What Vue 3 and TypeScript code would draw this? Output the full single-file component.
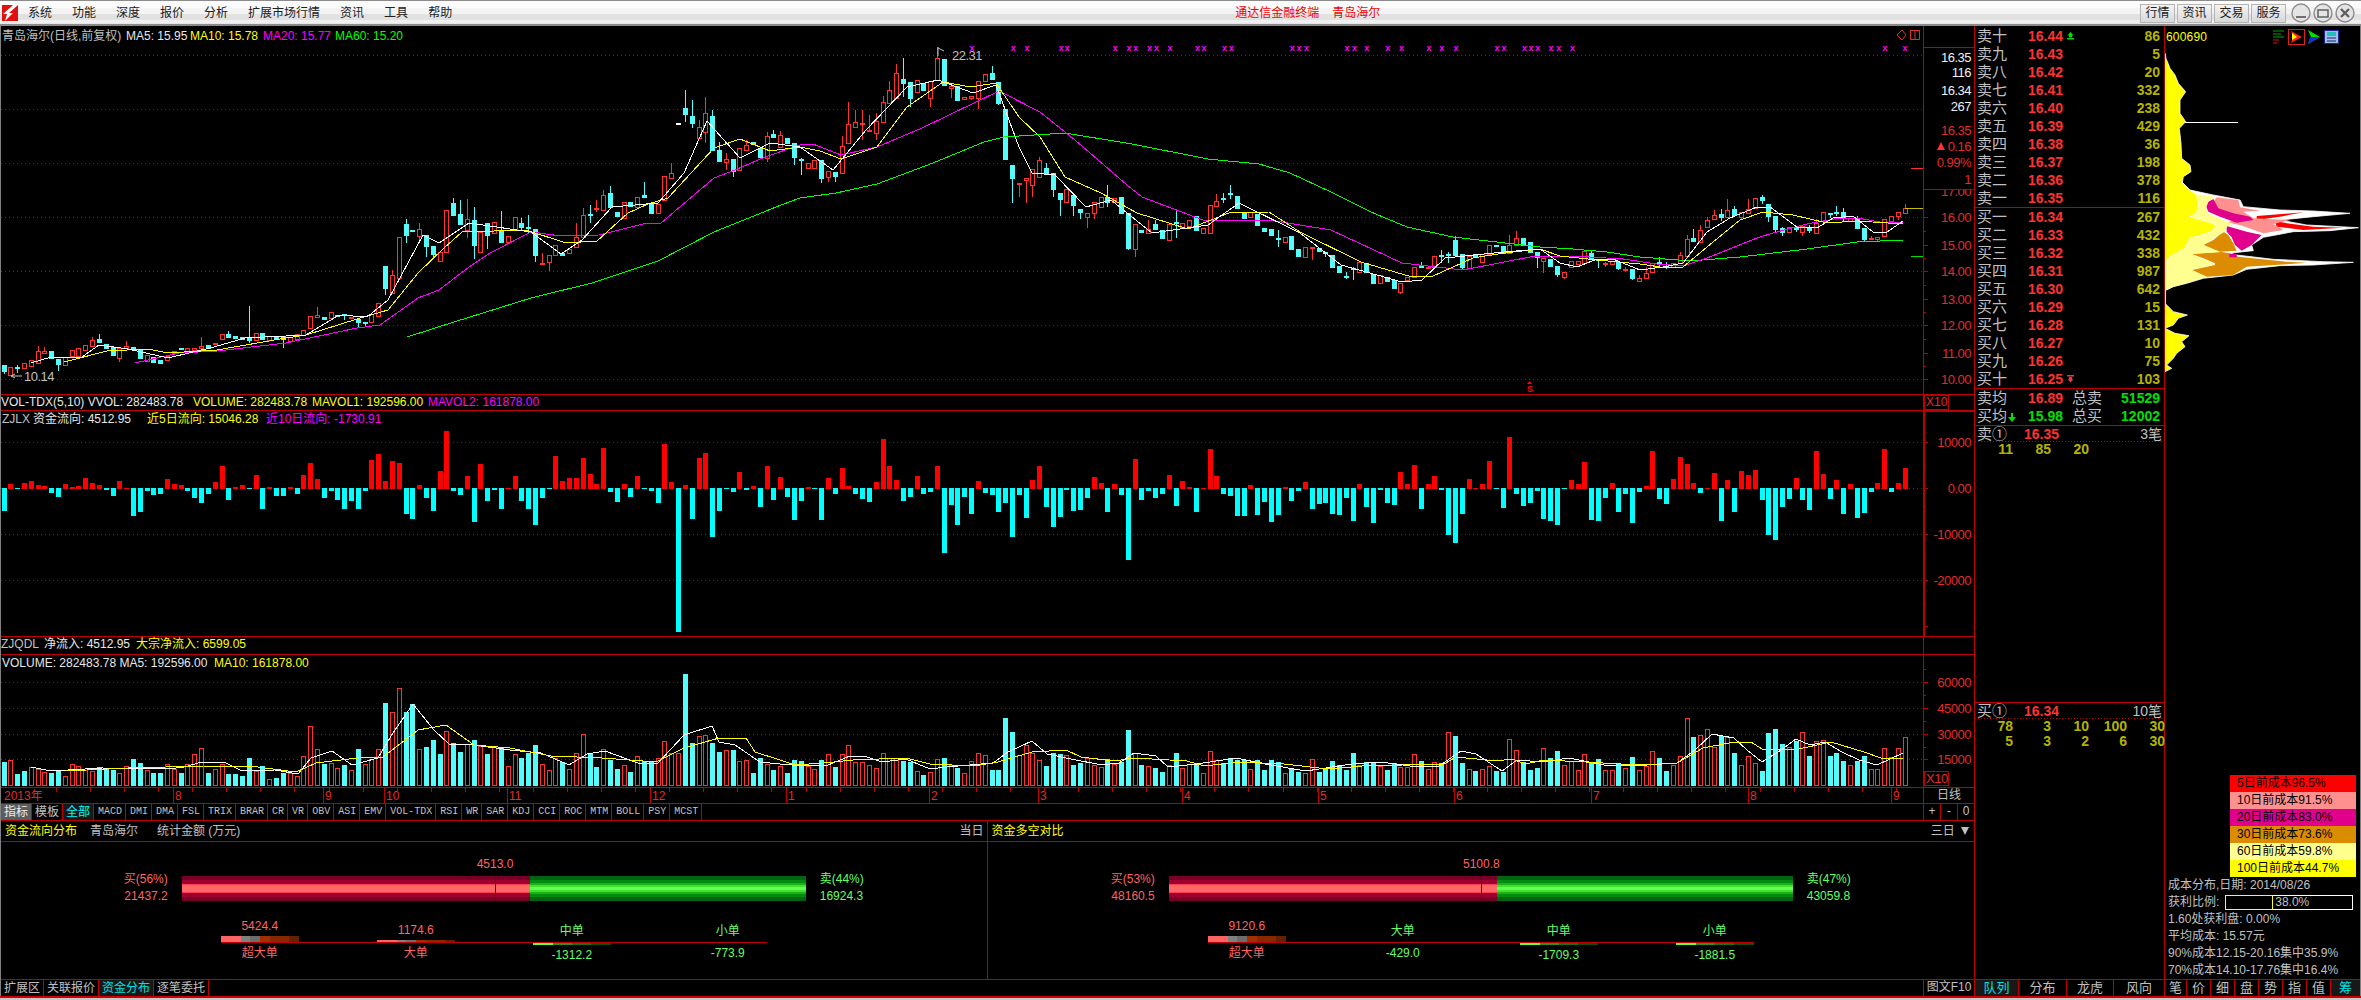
<template>
  <div class="screen">
    <div class="titlebar">
      <svg class="logo" width="16" height="16" viewBox="0 0 16 16">
        <rect width="16" height="16" fill="#e01010" />
        <polygon points="11,0 16,0 7,8 11,8 3,16 5,9 1,9" fill="#fff" />
      </svg>
      <div class="menu"><span v-for="m in menus" :key="m">{{ m }}</span></div>
      <div class="app-title"><span>通达信金融终端</span><span>青岛海尔</span></div>
      <div class="top-btns">
        <span v-for="b in topBtns" :key="b" class="top-btn">{{ b }}</span>
        <svg width="64" height="22" viewBox="0 0 64 22">
          <g fill="#e4e4e4" stroke="#8c8c8c" stroke-width="1.4">
            <circle cx="10" cy="11" r="9" />
            <circle cx="32" cy="11" r="9" />
            <circle cx="54" cy="11" r="9" />
          </g>
          <path d="M5 15h10" stroke="#707070" stroke-width="2" />
          <rect x="27" y="8" width="10" height="7" fill="none" stroke="#606060" stroke-width="1.5" />
          <path d="M50 7l8 8M58 7l-8 8" stroke="#606060" stroke-width="2.4" />
        </svg>
      </div>
    </div>

    <div class="body">
      <div class="left">
        <!-- K线 -->
        <div class="panel">
          <div class="legend legend-main">
            <span class="gray">青岛海尔(日线,前复权)</span>
            <span class="white abs" style="left:124px">MA5: 15.95</span>
            <span class="yellow abs" style="left:188px">MA10: 15.78</span>
            <span class="magenta abs" style="left:261px">MA20: 15.77</span>
            <span class="green abs" style="left:333px">MA60: 15.20</span>
          </div>
          <svg class="chart" width="1973" height="368" viewBox="1 26 1973 368">
            <defs>
              <clipPath id="price-clip"><rect x="1924" y="190" width="50" height="204" /></clipPath>
            </defs>
            <line v-for="y in mainDots" :key="y" class="dots" x1="1" :y1="y + 0.5" x2="1923" :y2="y + 0.5" />
            <text v-for="(m, i) in marks" :key="i" class="mark" :x="m" y="51">x</text>
            <g v-for="(c, i) in candleShapes" :key="i" class="crisp">
              <line :x1="c.x + 2.5" :y1="c.hi" :x2="c.x + 2.5" :y2="c.lo" :stroke="c.color" />
              <rect v-if="c.hollow" :x="c.x + 0.5" :y="c.top + 0.5" width="4" :height="c.h" fill="#000" :stroke="c.color" />
              <rect v-else :x="c.x" :y="c.top" width="5" :height="c.h + 1" :fill="c.color" />
            </g>
            <polyline class="ml" stroke="#00ff00" :points="pts(ma60)" />
            <polyline class="ml" stroke="#ff00ff" :points="pts(ma20)" />
            <polyline class="ml" stroke="#ffff00" :points="pts(ma10)" />
            <polyline class="ml" stroke="#ffffff" :points="pts(ma5)" />
            <path d="M938 47v9M938 48l6 3" stroke="#c0c0c0" fill="none" />
            <text class="ax-text gray-f" x="952" y="60">22.31</text>
            <path d="M11 376h11M11 376l4-2M11 376l4 2" stroke="#c0c0c0" fill="none" />
            <text class="ax-text gray-f" x="24" y="381">10.14</text>
            <path d="M1529.5 381l-2.5 3h5z" fill="#ff0000" />
            <text class="tiny" x="1527" y="392">S</text>
            <line x1="1911" y1="168.5" x2="1923" y2="168.5" stroke="#ff3030" />
            <line x1="1905" y1="208.5" x2="1923" y2="208.5" stroke="#c0c000" />
            <line x1="1911" y1="256.5" x2="1923" y2="256.5" stroke="#00e000" />
            <polygon points="1902,30 1906,35 1902,40 1897,35" fill="none" stroke="#e03030" />
            <path d="M1910.5 30.5h9v9h-9zM1915 30.5v9" fill="none" stroke="#e03030" />

            <line class="axis" x1="1923.5" y1="26" x2="1923.5" y2="394" />
            <line class="axis" x1="1923" y1="47.5" x2="1974" y2="47.5" />
            <line class="axis" x1="1923" y1="189.5" x2="1974" y2="189.5" />
            <text v-for="t in infoLabels" :key="t.y" class="ax" :class="t.c" x="1971" :y="t.y + 5">{{ t.v }}</text>
            <polygon points="1941,142 1937,150 1945,150" fill="#ff3030" />
            <g v-for="t in priceTicks" :key="t.y">
              <line class="axis" x1="1923" :y1="t.y + 0.5" :x2="t.v ? 1928 : 1926" :y2="t.y + 0.5" />
              <text v-if="t.v" class="ax red-f" x="1971" :y="t.y + 5">{{ t.v }}</text>
            </g>
            <text class="ax red-f" x="1971" y="196" clip-path="url(#price-clip)">17.00</text>
          </svg>
        </div>

        <div class="row h16">
          <div class="row-main">
            <span class="white">VOL-TDX(5,10) VVOL: 282483.78</span>
            <span class="yellow abs" style="left:192px">VOLUME: 282483.78</span>
            <span class="yellow abs" style="left:311px">MAVOL1: 192596.00</span>
            <span class="magenta abs" style="left:427px">MAVOL2: 161878.00</span>
          </div>
          <div class="axis-cell"><span class="x10">X10</span></div>
        </div>

        <!-- 资金流向 -->
        <div class="panel bt">
          <div class="legend">
            <span class="gray">ZJLX</span>
            <span class="white abs" style="left:31px">资金流向: 4512.95</span>
            <span class="yellow abs" style="left:145px">近5日流向: 15046.28</span>
            <span class="magenta abs" style="left:264px">近10日流向: -1730.91</span>
          </div>
          <svg class="chart" width="1973" height="225" viewBox="1 411 1973 225">
            <line v-for="y in [442, 534, 580]" :key="y" class="dots" x1="1" :y1="y + 0.5" x2="1923" :y2="y + 0.5" />
            <line class="dots" x1="1" y1="488.5" x2="1923" y2="488.5" />
            <rect v-for="(b, i) in flowBars" :key="i" class="crisp" :x="b.x" :y="b.y" width="5" :height="b.h" :fill="b.fill" />
            <line class="axis" x1="1923.5" y1="411" x2="1923.5" y2="636" stroke-width="2" />
            <line class="axis" x1="1923" y1="411.5" x2="1974" y2="411.5" />
            <g v-for="y in flowTicks" :key="y">
              <line class="axis" x1="1923" :y1="y + 0.5" :x2="(y - 442) % 46 === 0 ? 1928 : 1926" :y2="y + 0.5" />
            </g>
            <text class="ax red-f" x="1971" y="447">10000</text>
            <text class="ax red-f" x="1971" y="493">0.00</text>
            <text class="ax red-f" x="1971" y="539">-10000</text>
            <text class="ax red-f" x="1971" y="585">-20000</text>
          </svg>
        </div>

        <div class="row h18">
          <div class="row-main">
            <span class="gray">ZJQDL</span>
            <span class="white abs" style="left:43px">净流入: 4512.95</span>
            <span class="yellow abs" style="left:135px">大宗净流入: 6599.05</span>
          </div>
          <div class="axis-cell"></div>
        </div>

        <!-- 成交量 -->
        <div class="panel bt">
          <div class="legend">
            <span class="white">VOLUME: 282483.78 MA5: 192596.00</span>
            <span class="yellow abs" style="left:212px">MA10: 161878.00</span>
          </div>
          <svg class="chart" width="1973" height="132" viewBox="1 655 1973 132">
            <line v-for="y in [682, 708, 734, 759]" :key="y" class="dots" x1="1" :y1="y + 0.5" x2="1923" :y2="y + 0.5" />
            <g v-for="(b, i) in volBars" :key="i" class="crisp">
              <rect v-if="b.hollow" :x="b.x + 0.5" :y="b.y + 0.5" width="4" :height="b.h - 1" fill="#000" stroke="#ff3232" />
              <rect v-else :x="b.x" :y="b.y" width="5" :height="b.h" fill="#54fcfc" />
            </g>
            <polyline class="ml" stroke="#ffffff" :points="pts(volMa5)" />
            <polyline class="ml" stroke="#ffff00" :points="pts(volMa10)" />
            <line class="axis" x1="1923.5" y1="655" x2="1923.5" y2="787" />
            <g v-for="y in volTicks" :key="y">
              <line class="axis" x1="1923" :y1="y + 0.5" :x2="[682, 708, 734, 759].includes(y) ? 1928 : 1926" :y2="y + 0.5" />
            </g>
            <text class="ax red-f" x="1971" y="687">60000</text>
            <text class="ax red-f" x="1971" y="713">45000</text>
            <text class="ax red-f" x="1971" y="739">30000</text>
            <text class="ax red-f" x="1971" y="764">15000</text>
            <rect x="1924.5" y="771.5" width="24" height="14" fill="none" stroke="#c00000" />
            <text class="ax red-f start" x="1926" y="783">X10</text>
          </svg>
        </div>

        <div class="row h16">
          <svg class="dates" width="1922" height="15" viewBox="1 788 1922 15">
            <line v-for="x in dateTicks" :key="x" class="axis" :x1="x + 0.5" y1="788" :x2="x + 0.5" y2="792" />
            <g v-for="d in dateLabels" :key="d.t">
              <line v-if="d.t !== '2013年'" class="axis" :x1="d.x + 0.5" y1="788" :x2="d.x + 0.5" y2="803" />
              <text class="date" :x="d.x + 2" y="800">{{ d.t }}</text>
            </g>
          </svg>
          <div class="axis-cell cell-text">日线</div>
        </div>

        <div class="row h17">
          <div class="ind-tabs">
            <span v-for="t in indicators" :key="t" class="ind" :class="{ cn: t.charCodeAt(0) > 255, cur: t === '指标', on: t === '全部' }">{{ t }}</span>
          </div>
          <div class="axis-cell zoom-btns"><span>+</span><span>-</span><span>0</span></div>
        </div>

        <div class="row h21 fund-head">
          <div class="fh fh-left">
            <span class="yellow">资金流向分布</span>
            <span class="gray gap1">青岛海尔</span>
            <span class="gray gap2">统计金额 (万元)</span>
            <span class="gray today">当日</span>
          </div>
          <div class="fh fh-right">
            <span class="yellow">资金多空对比</span>
            <span class="gray three">三日 <i class="tri"></i></span>
          </div>
        </div>

        <div class="funds">
          <div v-for="f in funds" :key="f.net" class="fund">
            <div class="net"><span :style="{ left: f.mark + '%' }">{{ f.net }}</span></div>
            <div class="bar-row">
              <div class="side red-t right">
                <div>买({{ f.buyPct }}%)</div>
                <div>{{ f.buy }}</div>
              </div>
              <div class="bar">
                <div class="buy" :style="{ width: f.split + '%' }"></div>
                <div class="sell"></div>
                <i class="tick" :style="{ left: f.mark + '%' }"></i>
              </div>
              <div class="side green-t">
                <div>卖({{ 100 - f.buyPct }}%)</div>
                <div>{{ f.sell }}</div>
              </div>
            </div>
            <div class="orders">
              <div v-for="o in f.orders" :key="o.name" class="order" :class="o.up ? 'red-t' : 'green-t'">
                <div class="o-top">
                  <span>{{ o.up ? o.value : o.name }}</span>
                  <i v-if="o.up && o.h" class="seg seg-red" :style="{ height: o.h + 'px' }"></i>
                </div>
                <div class="o-bot">
                  <i v-if="!o.up" class="seg seg-green" :style="{ height: o.h + 'px' }"></i>
                  <span>{{ o.up ? o.name : o.value }}</span>
                </div>
              </div>
            </div>
          </div>
        </div>

        <div class="row h17 foot-tabs">
          <div class="low-tabs">
            <span v-for="t in lowTabs" :key="t" class="low" :class="{ on: t === '资金分布' }">{{ t }}</span>
          </div>
          <div class="axis-cell cell-text">图文F10</div>
        </div>
      </div>

      <!-- 盘口 -->
      <div class="book">
        <div class="quotes">
          <div v-for="(q, i) in asks" :key="q.name" class="q">
            <span class="q-name">{{ q.name }}</span>
            <span class="q-price">{{ q.price }}</span>
            <span class="q-flag">
              <svg v-if="i === 0" width="7" height="8" viewBox="0 0 7 8"><path d="M3.5 0l3 3.5h-6zM2 3.5h3v2H2zM0 6h7v1.5H0z" fill="#00e000" /></svg>
            </span>
            <span class="q-vol">{{ q.vol }}</span>
          </div>
        </div>
        <div class="quotes bt">
          <div v-for="(q, i) in bids" :key="q.name" class="q">
            <span class="q-name">{{ q.name }}</span>
            <span class="q-price">{{ q.price }}</span>
            <span class="q-flag">
              <svg v-if="i === 9" width="7" height="8" viewBox="0 0 7 8"><path d="M0 0h7v1.5H0zM2 2h3v2H2zM.5 4h6l-3 3.5z" fill="#ff3030" /></svg>
            </span>
            <span class="q-vol">{{ q.vol }}</span>
          </div>
        </div>
        <div class="quotes bt">
          <div class="q">
            <span class="q-name">卖均</span><span class="q-price">16.89</span>
            <span class="q-total">总卖</span><span class="q-vol up">51529</span>
          </div>
          <div class="q">
            <span class="q-name">买均<svg class="down" width="8" height="9" viewBox="0 0 8 9"><path d="M3 0h2v4h3L4 9 0 4h3z" fill="#00e000" /></svg></span>
            <span class="q-price dn">15.98</span>
            <span class="q-total">总买</span><span class="q-vol up">12002</span>
          </div>
        </div>
        <div class="queue bt">
          <div class="q q-line">
            <span class="q-name">卖①</span><span class="q-price first">16.35</span><span class="count">3笔</span>
          </div>
          <div class="tape"><span>11</span><span>85</span><span>20</span></div>
        </div>
        <div class="queue bt second">
          <div class="q q-line">
            <span class="q-name">买①</span><span class="q-price first">16.34</span><span class="count">10笔</span>
          </div>
          <div class="tape"><span v-for="(n, i) in tape1" :key="i">{{ n }}</span></div>
          <div class="tape"><span v-for="(n, i) in tape2" :key="i">{{ n }}</span></div>
        </div>
        <div class="book-tabs">
          <span v-for="t in bookTabs" :key="t" :class="{ on: t === '队列' }">{{ t }}</span>
        </div>
      </div>

      <!-- 筹码分布 -->
      <div class="chips">
        <svg width="195" height="350" viewBox="2165 26 195 350">
          <text class="code" x="2166" y="41">600690</text>
          <path d="M2273 31h11M2273 34h8M2273 37h11" stroke="#00a000" />
          <path d="M2273 40h6M2273 43h4" stroke="#e01010" />
          <rect x="2288.5" y="29.5" width="16" height="15" fill="#000" stroke="#e02020" />
          <polygon points="2291,31 2302,37 2291,43 2293,37" fill="#ff2020" />
          <polygon points="2292,33 2297,37 2292,40" fill="#ffff00" />
          <polygon points="2308,30 2320,37 2308,44 2311,37" fill="#00e000" />
          <polygon points="2310,37 2320,37 2308,44" fill="#1030e0" />
          <rect x="2324.5" y="30.5" width="14" height="13" fill="#a0c0e0" stroke="#2020a0" />
          <rect x="2327" y="32" width="9" height="4" fill="#20c0c0" />
          <path d="M2327 38h9M2327 41h9" stroke="#202080" />
          <polygon class="edge" :points="z3(silhouette)" fill="#fff" />
          <polygon :points="z3(red1)" fill="#ff0000" />
          <polygon :points="z3(red2)" fill="#ff0000" />
          <polygon :points="z3(pink)" fill="#ff9090" />
          <polygon :points="z3(magenta1)" fill="#e0008c" />
          <polygon :points="z3(magenta2)" fill="#e0008c" />
          <polygon :points="z3(orange1)" fill="#dc8c00" />
          <polygon :points="z3(orange2)" fill="#dc8c00" />
          <polygon :points="z3(magenta3)" fill="#e0008c" />
          <polygon :points="z3(pale)" fill="#ffff90" />
          <polygon class="edge" :points="z3(yellow1)" fill="#ffff00" />
          <polygon class="edge" :points="z3(yellow2)" fill="#ffff00" />
          <polygon class="edge" :points="z3(yellow3)" fill="#ffff00" />
          <line x1="2185" y1="122.5" x2="2238" y2="122.5" stroke="#fff" />
          <line x1="2165.5" y1="54" x2="2165.5" y2="372" stroke="#fff" />
        </svg>
        <div class="chip-legend">
          <div v-for="l in chipLegend" :key="l.t" :style="{ background: l.c }">{{ l.t }}</div>
        </div>
        <div class="chip-info">
          <div>成本分布,日期: 2014/08/26</div>
          <div class="profit">
            获利比例:
            <div class="meter">
              <i class="meter-on" :style="{ width: profit + '%' }"></i>
              <span class="meter-off">{{ profit.toFixed(1) }}%</span>
            </div>
          </div>
          <div>1.60处获利盘: 0.00%</div>
          <div>平均成本: 15.57元</div>
          <div>90%成本12.15-20.16集中35.9%</div>
          <div>70%成本14.10-17.76集中16.4%</div>
        </div>
        <div class="chip-tabs">
          <span v-for="t in chipTabs" :key="t" :class="{ on: t === '筹' }">{{ t }}</span>
        </div>
      </div>
    </div>
    <div class="footer"></div>
  </div>
</template>

<script setup lang="ts">
type Pt = [number, number];

const menus: string[] = ['系统', '功能', '深度', '报价', '分析', '扩展市场行情', '资讯', '工具', '帮助'];
const topBtns: string[] = ['行情', '资讯', '交易', '服务'];
const indicators: string[] = ['指标', '模板', '全部', 'MACD', 'DMI', 'DMA', 'FSL', 'TRIX', 'BRAR', 'CR', 'VR', 'OBV', 'ASI', 'EMV', 'VOL-TDX', 'RSI', 'WR', 'SAR', 'KDJ', 'CCI', 'ROC', 'MTM', 'BOLL', 'PSY', 'MCST'];
const lowTabs: string[] = ['扩展区', '关联报价', '资金分布', '逐笔委托'];
const bookTabs: string[] = ['队列', '分布', '龙虎', '风向'];
const chipTabs: string[] = ['笔', '价', '细', '盘', '势', '指', '值', '筹'];
const tape1: number[] = [78, 3, 10, 100, 30];
const tape2: number[] = [5, 3, 2, 6, 30];
const profit = 38;

const barX = (i: number): number => 4 + i * 6.814;
const pts = (a: Pt[]): string => a.map((p) => p.join(',')).join(' ');
// 筹码图按放大图坐标取的点
const z3 = (a: Pt[]): string => a.map((p) => `${1880 + p[0] / 3},${p[1] / 3}`).join(' ');

const mainDots: number[] = [55, 109, 163, 217, 271, 325, 379];

// 类型+实体上下+影线上下，单位是放大3倍后的y
const candleSrc: [string, number][] = [
  ['c1095,1112,,1122 r1100,1125 c1100,1102,1095,1118 r1090,1103 r1080,1097 r1053,1090,1038 r1053,1060,1040 c1053,1075 c1077,1092,,1112 r1072,1095 '
  + 'r1050,1067 r1045,1068 r1035,1050 r1020,1037,1010 c1018,1027,1003 c1033,1045 c1040,1065 r1045,1073,,1085 r1037,1045,1023 c1040,1048 '
  + 'c1050,1073 r1065,1082 c1070,1085 c1080,1090 r1068,1080 r1052,1060 c1044,1046 r1045,1052 r1045,1050 r1037,1045,1012 '
  + 'c1035,1045 r1030,1032 r1003,1017 c1003,1010,993 c1008,1015 c1010,1018 c1012,1020,918,1030 r1000,1020 c998,1018 r1008,1020 '
  + 'c1012,1017 c1008,1018,,1043 r1012,1022 r1003,1018 r990,1005 r948,985 r945,952,922 c952,958 r937,955 c945,948 '
  + 'c943,946,,960 r950,953 c958,965,,980 c965,967,,980 r942,965 r908,948 c798,865,,885 r825,880,810 r712,835 c672,705,657,728 '
  + 'c690,693 r688,708,670,730 c705,738,,770 c738,762,,770 r755,782 r630,755 c610,645,595 c642,672,600 r658,690,598,715 c660,735,622,778 '
  + 'r695,755 c668,705,,748 r665,700 c690,725,633 r708,725 r652,690 c670,680,655,690 c680,683,645,700 c688,765,,785 r788,790,760,795 '
  + 'r765,785,,812 r735,765 c758,765 r748,760 r710,740,670 r646,710,625 c642,645,615,670 r625,627,600,635 r585,630,570 c580,620,558 '
  + 'c635,648 r607,655 c605,618 r590,620 c585,590,545 c612,640 r612,640 r528,600 r520,535,490 w370,373 '
  + 'c325,342,270,365 c348,368,300,385 r380,415,360 r338,395,292,430 c348,450,330 c450,482,425 r478,485,460,510 c477,513,,530 r445,510 r435,450,420 '
  + 'c427,432 c445,470 r408,475,395,485 c402,412,390 r405,440,392 c415,430 c430,472,,495 '
  + 'c478,480,475,525 r490,505 r480,505 c480,533,,550 r513,530,,545 c515,527,,545 r438,520,408 '
  + 'r373,430,305 r365,382,330 r370,372,330,420 r390,392,345 r363,398,340,420 r305,365,288 r270,310,243 r220,295,192 c237,248,175,290 c245,295,,320 '
  + 'r240,275 c250,270 r243,295,,320 r175,240,140 c178,255 r258,263,,295 c258,300 r292,298 r287,294,,300 r242,293,,328 '
  + 'r222,243 c218,237,198 c246,310,,315 c328,477 c495,533,,608 r548,552,,590 r535,540,,608 r508,555,,590 r480,530,470 c505,522,490 '
  + 'c518,567,,592 c580,597,,648 r568,607 c585,615,,648 c628,635,,656 r640,650,,684 r607,640,,658 r590,620 c590,605,555,620 r595,605 '
  + 'c590,640 c640,745,,750 r672,748,,770 c690,697 r688,700,660 c672,688,660 c690,715 r672,720 c665,670,630,715 r670,680 '
  + 'r660,677 c648,690 r685,700 r615,698 r603,617,583 c595,598,580,610 c580,583,555,597 c588,625 c635,653 r635,650 '
  + 'c642,675 c685,692 c688,705 c713,716,690,740 r712,727 c708,748 c748,768 r740,770 r740,743,,780 c745,752 '
  + 'c755,758,,772 c765,800 c798,815 c828,830,815,838 c805,808,800,840 r785,815 c788,815 c822,848 r825,850 c830,842 '
  + 'c840,865 r848,875,,882 r832,840 r800,830 c797,802,785 r800,805 r768,800 c765,767,750,790 c762,764,755,790 c720,765,708 '
  + 'c763,800,,810 r768,803 c762,772 r762,785 r735,762 c735,737 c738,760 r735,760,705 r715,735,693 c715,735 '
  + 'c727,755 c757,770,,803', 0],
  ['r265,272,,310 c268,288,,292 c288,312,,320 r307,320,,327 r273,292 r272,283 r243,280 c250,268,242 c268,270,,295 r280,282,275,290 '
  + 'r273,283 c275,295,,300 r298,300,292,305 c297,325,,330 r324,332,315 r308,323,290 r278,305 c275,280,262,295 c288,290,275,297 r280,290 '
  + 'r255,280,245 r208,257,195 c204,214,178 r181,215,165,220 r150,170,140 r135,147,120 c132,140,118,152 r120,142,87 c117,136,108,142 r127,140,,150 '
  + 'r118,130,87 r85,113 c80,90,75,102 c102,137,,155 c137,178,,185 c175,185,170,197 r170,185 c170,178,,185 r168,185,,197 c175,180,165,188 '
  + 'r158,190,148 r127,153 c128,130,,145 c127,129,108,137 c125,142,113,157 r143,152 c148,173,138 c173,207,,212 r205,208,198 r202,207,,213 '
  + 'r148,197 r138,152 r127,137,,150 r115,128,102', 510],
];

const colorOf: Record<string, string> = { c: '#54fcfc', r: '#ff3232', w: '#ffffff' };
const candleShapes = candleSrc
  .flatMap(([s, off]) => s.split(' ').map((t) => {
    const kind = t[0];
    const [a, b, hi, lo] = t.slice(1).split(',').map((v) => (v === '' ? NaN : Number(v)));
    const top = Math.round((a + off) / 3);
    const bot = Math.round((b + off) / 3);
    return {
      kind,
      top,
      h: Math.max(bot - top, 1),
      hi: Number.isNaN(hi) || hi === undefined ? top : Math.round((hi + off) / 3),
      lo: Number.isNaN(lo) || lo === undefined ? bot : Math.round((lo + off) / 3),
    };
  }))
  .map((c, i) => ({
    x: Math.round(barX(i) - 2.5),
    top: c.top,
    h: c.h,
    hi: c.hi,
    lo: c.lo,
    hollow: c.kind === 'r',
    color: colorOf[c.kind],
  }));

const ma60: Pt[] = [[407, 337], [454, 322], [531, 298], [592, 283], [658, 261], [714, 232], [781, 205], [800, 198], [836, 193], [877, 184], [933, 163], [984, 142], [1004, 137], [1065, 133], [1132, 144], [1208, 159], [1259, 164], [1290, 173], [1331, 192], [1371, 212], [1407, 227], [1453, 237], [1514, 244], [1540, 247], [1573, 249], [1607, 252], [1640, 257], [1690, 261], [1740, 257], [1807, 249], [1857, 242], [1903, 240]];
const ma20: Pt[] = [[135, 363], [179, 353], [217, 351], [286, 343], [357, 328], [380, 325], [418, 298], [439, 290], [469, 267], [490, 253], [531, 232], [561, 236], [599, 235], [643, 224], [661, 223], [714, 178], [735, 170], [765, 157], [800, 145], [813, 144], [841, 155], [877, 147], [922, 128], [999, 91], [1040, 112], [1075, 140], [1127, 185], [1142, 197], [1203, 220], [1269, 220], [1331, 230], [1402, 263], [1463, 270], [1535, 256], [1573, 256], [1623, 259], [1657, 264], [1683, 266], [1707, 258], [1757, 238], [1773, 233], [1807, 224], [1840, 218], [1857, 218], [1880, 222], [1903, 223]];
const ma10: Pt[] = [[64, 362], [107, 351], [148, 349], [168, 353], [217, 350], [286, 338], [306, 335], [357, 319], [388, 310], [418, 273], [444, 248], [462, 232], [526, 230], [566, 243], [597, 241], [628, 213], [648, 204], [668, 198], [714, 148], [740, 139], [770, 151], [800, 147], [820, 151], [841, 159], [877, 147], [907, 107], [943, 82], [971, 87], [996, 83], [1019, 117], [1040, 137], [1065, 177], [1101, 193], [1137, 213], [1188, 229], [1229, 213], [1269, 212], [1300, 232], [1361, 262], [1412, 277], [1433, 276], [1473, 258], [1504, 253], [1540, 249], [1560, 256], [1597, 260], [1640, 264], [1667, 268], [1683, 267], [1707, 247], [1740, 220], [1763, 212], [1793, 215], [1827, 223], [1857, 221], [1903, 224]];
const ma5: Pt[] = [[31, 363], [51, 357], [82, 357], [99, 345], [128, 349], [168, 358], [214, 347], [245, 338], [306, 335], [339, 315], [367, 317], [388, 300], [423, 235], [439, 243], [469, 223], [531, 232], [561, 254], [582, 240], [612, 207], [658, 203], [684, 173], [707, 121], [740, 158], [770, 143], [800, 147], [833, 170], [866, 130], [907, 87], [938, 80], [973, 93], [996, 85], [1019, 147], [1032, 173], [1055, 175], [1086, 207], [1111, 200], [1152, 233], [1208, 225], [1239, 203], [1300, 233], [1341, 265], [1377, 275], [1402, 282], [1422, 280], [1445, 258], [1504, 252], [1540, 249], [1560, 263], [1577, 267], [1597, 259], [1613, 259], [1640, 270], [1663, 267], [1683, 263], [1707, 232], [1730, 218], [1757, 207], [1770, 207], [1797, 227], [1817, 228], [1833, 218], [1853, 216], [1873, 232], [1887, 232], [1903, 221]];

const marks: number[] = [337, 418, 445, 512, 524, 618, 645, 658, 685, 699, 725, 779, 792, 832, 846, 965, 978, 993, 1072, 1087, 1111, 1152, 1179, 1233, 1258, 1286, 1366, 1380, 1420, 1433, 1446, 1472, 1487, 1514]
  .map((x) => 800 + x / 1.96)
  .concat([1885, 1905]);

const infoLabels = [
  { y: 57, v: '16.35', c: 'white-f' },
  { y: 72, v: '116', c: 'white-f' },
  { y: 90, v: '16.34', c: 'white-f' },
  { y: 106, v: '267', c: 'white-f' },
  { y: 130, v: '16.35', c: 'red-f' },
  { y: 146, v: '0.16', c: 'red-f' },
  { y: 162, v: '0.99%', c: 'red-f' },
  { y: 179, v: '1', c: 'red-f' },
];
const priceTicks = [
  { y: 217, v: '16.00' }, { y: 231, v: '' }, { y: 245, v: '15.00' }, { y: 258, v: '' }, { y: 271, v: '14.00' }, { y: 285, v: '' },
  { y: 299, v: '13.00' }, { y: 312, v: '' }, { y: 325, v: '12.00' }, { y: 339, v: '' }, { y: 353, v: '11.00' }, { y: 366, v: '' }, { y: 379, v: '10.00' },
];

// 资金流向柱高，放大3倍后的像素
const flowSrc: number[] = [
  -68, 14, -2, 19, 25, 13, 10, -15, -26, 16, 7, 10, 34, 19, 13, -5, -24, 25, 4, -83, -71, -9, -20, -17, 31, 16, 13, -9, -29, -44, -17, 22, 70, -35, 7, 13, -2, 43, -62, 7, -23, -23, 7, -17, 43, 79, 31, -29, -8, -35, -62, -38, -62, -8, 88, 106, 25, 85, 79, -77, -92, 13, -29, -68, 55, 175, -8, -20, 40, -101, 76, -38, -5, -62, 2, 40, -38, -62, -110, -29, -2, 100, 25, 34, 34, 94, 46, 16, 124, -11, -41, 16, -26, 40, -2, -8, -44, 136, 22, -433, 13, -92, 94, 108, -146, -68, -2, -11, 52, -5, 10, -56,
  70, -35, 37, -26, -95, -38, 7, -2, -95, 34, -17, 64, 10, -17, -32, -41, 22, 151, 70, 28, -38, -26, 40, -17, -11, 70, -194, -50, -110, -26, -77, 25, -14, -20, -71, -44, -146, -20, -89, 28, 70, -56, -116, -86, -5, -68, -65, -29, 37, 19, -71, 16, -20, -215, 91, -35, -8, -29, -17, 43, -53, 25, 7, -71, 4, 121, 40, -17, -23, -83, -83, 13, -80, -41, -101, -80, 7, -38, -8, 22, -62, -47, -44, -77, -80, -29, -98, 16, -56, -104, -5, -44, -50, 52, 16, 73, -62, 16, 40, -5, -140, -164, -77, 31, 2, 16, 85, -2, -59, 157, -17,
  -55, -44, -8, -92, -98, -110, -3, 27, 16, 82, -95, -98, -29, 19, -71, -17, -104, -11, 10, 115, -32, -47, 31, 97, 76, 19, -14, 4, 49, -98, 28, -71, 55, 43, 58, -35, -140, -155, -56, -32, 34, -35, -65, 115, 46, -32, 28, -77, 16, -89, -74, -11, 19, 121, -11, 19, 64,
];
const flowBars = flowSrc.map((v, i) => {
  const h = Math.max(Math.round(Math.abs(v) / 3), 1);
  return {
    x: Math.round(barX(i) - 2.5),
    y: v > 0 ? 489 - h : 488,
    h,
    fill: v > 0 ? '#ff0000' : '#00ffff',
  };
});
const flowTicks: number[] = [442, 465, 488, 511, 534, 557, 580, 603, 626];

// 成交量，正数空心红柱，负数实心青柱
const volSrc: number[] = [
  -72, 78, -36, -46, 56, 52, 42, -38, -48, 30, 66, 60, 48, 46, -58, -52, -48, 40, 60, -80, -68, 48, -40, -40, 66, 50, -38, 66, 96, 114, -40, 50, 66, -36, -36, -30, -84, 45, -60, 22, -25, -40, 38, 30, 90, 180, 110, -66, 68, 55, -62, 48, -110, 66, 80, 110, -250, 222, 294, -222, -246, 110, -118, -138, -96, 165, -128, -102, 126, -138, 120, -96, 120, -114, 60, 96, -84, -100, -123, 66, 48, 84, -72, 50, 100, 156, -96, -56, 110, -78, -52, 62, -42, 90, -74, -76, 84, 135, 100, 100, -336, -128, 150, 153, -130, -102, 108, -108, 76, 78, -40, -84, 66, -48, 60, -40, -78,
  -75, 60, 50, -78, 96, -57, 97, 122, 72, 72, 62, 53, 98, 85, 85, -75, -72, 44, -33, 41, 80, -84, 62, -54, 40, 74, 98, 92, -48, -48, -204, -162, 92, 122, 100, 78, -60, -100, -96, 92, -63, -69, 85, 62, 56, -81, 66, -72, -168, 100, -63, 60, -54, -42, 62, -100, 54, 66, -68, 38, 104, 78, -68, -84, -78, -78, 50, -78, -48, -78, -72, 38, -52, -42, 38, 80, -42, -50, -75, -62, -48, -100, 62, -72, -72, 60, -48, -68, 58, 58, 96, -75, 50, 72, -68, 162, -150, -69, 50, -45, 50, 60, -45, -42, 142, 107, -72, -48, -54,
  113, -85, -105, 62, 75, 48, 97, -70, -82, 48, 48, -66, 55, -87, 48, 60, 104, -84, -45, 62, 90, 203, -147, 153, 170, 116, -150, 148, -99, 62, 90, 68, -45, -160, -171, -125, 118, -135, 162, -90, 134, 138, -90, -99, -75, 62, -75, -90, 50, 50, 113, 86, 113, 146,
];
const volBars = volSrc.map((v, i) => {
  const h = Math.round(Math.abs(v) / 3);
  return { x: Math.round(barX(i) - 2.5), y: 786 - h, h, hollow: v > 0 };
});
const volMa5: Pt[] = [[31, 767], [51, 771], [102, 768], [168, 769], [184, 767], [202, 762], [224, 762], [242, 771], [275, 770], [298, 774], [311, 758], [332, 751], [352, 765], [378, 758], [393, 733], [413, 704], [434, 730], [449, 744], [474, 745], [510, 750], [541, 753], [569, 765], [587, 754], [605, 751], [638, 763], [658, 763], [684, 735], [712, 726], [719, 742], [735, 745], [760, 762], [780, 764], [804, 766], [828, 765], [850, 756], [867, 757], [882, 762], [906, 759], [930, 769], [947, 767], [993, 763], [1008, 752], [1032, 741], [1047, 754], [1071, 759], [1102, 765], [1119, 763], [1134, 753], [1156, 756], [1168, 767], [1197, 764], [1236, 758], [1265, 764], [1306, 771], [1352, 764], [1381, 762], [1410, 766], [1439, 766], [1461, 751], [1476, 754], [1502, 771], [1517, 760], [1543, 762], [1569, 758], [1604, 765], [1647, 765], [1677, 763], [1695, 750], [1712, 734], [1734, 738], [1747, 750], [1762, 762], [1781, 750], [1796, 739], [1810, 745], [1825, 742], [1842, 752], [1859, 760], [1877, 765], [1903, 753]];
const volMa10: Pt[] = [[66, 771], [128, 768], [204, 766], [250, 766], [296, 772], [316, 763], [357, 758], [383, 757], [418, 730], [446, 725], [474, 745], [510, 748], [551, 756], [602, 758], [656, 762], [684, 748], [719, 738], [746, 738], [755, 752], [780, 760], [795, 765], [824, 763], [853, 760], [906, 758], [930, 764], [974, 766], [998, 762], [1032, 752], [1066, 750], [1081, 757], [1114, 761], [1134, 758], [1187, 761], [1204, 766], [1240, 762], [1284, 764], [1328, 769], [1362, 766], [1444, 764], [1456, 757], [1497, 761], [1512, 759], [1526, 764], [1543, 760], [1586, 762], [1638, 765], [1677, 763], [1703, 748], [1729, 743], [1751, 742], [1762, 749], [1794, 750], [1831, 742], [1864, 752], [1881, 758], [1903, 758]];
const volTicks: number[] = [669, 682, 695, 708, 721, 734, 747, 759, 772];

const dateLabels = [
  { t: '2013年', x: 2 }, { t: '8', x: 173 }, { t: '9', x: 323 }, { t: '10', x: 384 }, { t: '11', x: 507 }, { t: '12', x: 650 }, { t: '1', x: 786 }, { t: '2', x: 929 },
  { t: '3', x: 1038 }, { t: '4', x: 1182 }, { t: '5', x: 1318 }, { t: '6', x: 1454 }, { t: '7', x: 1591 }, { t: '8 ', x: 1748 }, { t: '9 ', x: 1891 },
];
const dateTicks: number[] = Array.from({ length: 56 }, (_, i) => Math.round(56 + i * 34.07));

const funds = [
  {
    net: '4513.0', mark: 50.2, split: 55.8, buyPct: 56, buy: '21437.2', sell: '16924.3',
    orders: [
      { name: '超大单', value: '5424.4', up: true, h: 6 },
      { name: '大单', value: '1174.6', up: true, h: 2 },
      { name: '中单', value: '-1312.2', up: false, h: 2 },
      { name: '小单', value: '-773.9', up: false, h: 0 },
    ],
  },
  {
    net: '5100.8', mark: 50.1, split: 52.6, buyPct: 53, buy: '48160.5', sell: '43059.8',
    orders: [
      { name: '超大单', value: '9120.6', up: true, h: 6 },
      { name: '大单', value: '-429.0', up: false, h: 0 },
      { name: '中单', value: '-1709.3', up: false, h: 2 },
      { name: '小单', value: '-1881.5', up: false, h: 2 },
    ],
  },
];

const asks = [
  { name: '卖十', price: '16.44', vol: 86 }, { name: '卖九', price: '16.43', vol: 5 }, { name: '卖八', price: '16.42', vol: 20 }, { name: '卖七', price: '16.41', vol: 332 }, { name: '卖六', price: '16.40', vol: 238 },
  { name: '卖五', price: '16.39', vol: 429 }, { name: '卖四', price: '16.38', vol: 36 }, { name: '卖三', price: '16.37', vol: 198 }, { name: '卖二', price: '16.36', vol: 378 }, { name: '卖一', price: '16.35', vol: 116 },
];
const bids = [
  { name: '买一', price: '16.34', vol: 267 }, { name: '买二', price: '16.33', vol: 432 }, { name: '买三', price: '16.32', vol: 338 }, { name: '买四', price: '16.31', vol: 987 }, { name: '买五', price: '16.30', vol: 642 },
  { name: '买六', price: '16.29', vol: 15 }, { name: '买七', price: '16.28', vol: 131 }, { name: '买八', price: '16.27', vol: 10 }, { name: '买九', price: '16.26', vol: 75 }, { name: '买十', price: '16.25', vol: 103 },
];

const silhouette: Pt[] = [[855, 500], [905, 545], [930, 570], [1000, 585], [1080, 600], [1090, 620], [1200, 630], [1300, 633], [1410, 640], [1300, 650], [1200, 660], [1280, 675], [1380, 680], [1435, 683], [1350, 692], [1240, 695], [1150, 712], [1115, 735], [1120, 752], [1090, 755], [1050, 760], [1070, 765], [1180, 778], [1330, 785], [1420, 787], [1300, 795], [1200, 797], [1100, 808], [1060, 825], [970, 835], [920, 850], [880, 860], [855, 872]];
const yellow1: Pt[] = [[855, 160], [858, 175], [870, 205], [885, 225], [895, 250], [917, 275], [900, 300], [900, 340], [917, 365], [898, 385], [903, 430], [905, 475], [930, 495], [933, 515], [910, 530], [907, 548], [930, 570], [950, 585], [955, 610], [950, 640], [930, 650], [1000, 670], [1008, 680], [995, 695], [930, 715], [915, 745], [870, 770], [858, 785], [855, 790]];
const yellow2: Pt[] = [[855, 910], [880, 935], [922, 945], [895, 955], [880, 975], [855, 985]];
const yellow3: Pt[] = [[855, 985], [885, 1000], [927, 1007], [905, 1025], [915, 1040], [890, 1060], [880, 1075], [860, 1095], [875, 1105], [855, 1115]];
const pale: Pt[] = [[930, 570], [950, 583], [1005, 590], [985, 605], [978, 625], [985, 640], [1040, 665], [1060, 670], [1040, 680], [1035, 695], [1000, 715], [970, 735], [1020, 757], [935, 762], [970, 778], [1005, 793], [935, 810], [980, 830], [920, 850], [880, 860], [855, 872], [855, 790], [858, 785], [870, 770], [915, 745], [930, 715], [995, 695], [1008, 680], [1000, 670], [930, 650], [950, 640], [955, 610], [950, 585]];
const pink: Pt[] = [[1010, 592], [1075, 600], [1080, 622], [1140, 632], [1090, 635], [1120, 655], [1230, 660], [1180, 672], [1210, 690], [1150, 700], [1080, 675], [1040, 668], [1062, 660], [1010, 625], [1000, 605]];
const magenta1: Pt[] = [[1000, 597], [1015, 625], [1060, 640], [1110, 650], [1120, 660], [1070, 668], [1020, 650], [985, 635], [978, 618], [985, 605]];
const magenta2: Pt[] = [[1040, 678], [1100, 695], [1145, 705], [1115, 735], [1085, 752], [1065, 735], [1055, 712], [1040, 695]];
const magenta3: Pt[] = [[1048, 762], [1070, 762], [1070, 772], [1048, 772]];
const orange1: Pt[] = [[1030, 695], [1045, 705], [1060, 730], [1070, 752], [1020, 755], [970, 735], [1000, 720]];
const orange2: Pt[] = [[935, 762], [1020, 755], [1050, 760], [1075, 770], [1220, 785], [1280, 788], [1220, 793], [1100, 800], [1060, 825], [980, 830], [935, 810], [1005, 795], [1005, 790], [970, 775]];
const red1: Pt[] = [[1130, 648], [1270, 637], [1200, 650], [1130, 660]];
const red2: Pt[] = [[1185, 662], [1220, 670], [1300, 680], [1390, 683], [1270, 690], [1190, 680]];

const chipLegend = [
  { t: '5日前成本96.5%', c: '#ff0000' },
  { t: '10日前成本91.5%', c: '#ff9090' },
  { t: '20日前成本83.0%', c: '#e0008c' },
  { t: '30日前成本73.6%', c: '#dc8c00' },
  { t: '60日前成本59.8%', c: '#ffff90' },
  { t: '100日前成本44.7%', c: '#ffff00' },
];
</script>

<style scoped>
.screen {
  width: 2361px;
  height: 1000px;
  display: flex;
  flex-direction: column;
  background: #000;
  overflow: hidden;
  font-family: "Liberation Sans", "Noto Sans CJK SC", sans-serif;
  font-size: 12px;
  line-height: 14px;
  color: #c0c0c0;
}

.titlebar {
  height: 26px;
  flex: none;
  display: flex;
  align-items: center;
  color: #202020;
  background: linear-gradient(#8c8c8c 0 1px, #fbfbfb 1px 30%, #f3f3f3 30% 52%, #e2e2e2 52% 78%, #f0f0f0 78% 90%, #8a8a8a 94%);
}

.logo {
  margin: 0 0 0 2px;
}

.menu {
  display: flex;
  gap: 20px;
  margin-left: 10px;
}

.app-title {
  display: flex;
  gap: 13px;
  margin-left: 783px;
  color: #f00000;
}

.top-btns {
  display: flex;
  align-items: center;
  gap: 2px;
  margin-left: auto;
  padding-right: 6px;
}

.top-btn {
  width: 33px;
  height: 17px;
  line-height: 17px;
  text-align: center;
  border: 1px solid #b4b4b4;
  background: linear-gradient(#f4f4f4, #d8d8d8);
}

.top-btns svg {
  margin-left: 3px;
}

.body {
  flex: 1;
  display: flex;
  min-height: 0;
}

.left {
  width: 1974px;
  box-sizing: border-box;
  flex: none;
  border-left: 1px solid #808080;
  display: flex;
  flex-direction: column;
}

.panel {
  position: relative;
}

.bt {
  border-top: 1px solid #c00000;
}

.chart,
.dates {
  display: block;
}

.legend {
  position: absolute;
  top: 1px;
  left: 1px;
  white-space: nowrap;
}

.legend-main {
  top: 3px;
}

.abs {
  position: absolute;
  top: 0;
}

.white { color: #e8e8e8; }
.gray { color: #c0c0c0; }
.yellow { color: #ffff00; }
.magenta { color: #ff00ff; }
.green { color: #00ff00; }

.dots {
  stroke: #c00000;
  stroke-dasharray: 1 3;
}

.axis {
  stroke: #c00000;
}

.crisp,
.axis,
.ml {
  shape-rendering: crispEdges;
}

.ml {
  fill: none;
  stroke-width: 1;
}

.mark {
  font-size: 9px;
  fill: #ff00ff;
  font-weight: 700;
  text-anchor: middle;
}

.gray-f { fill: #c0c0c0; }
.white-f { fill: #f0f0f0; }
.red-f { fill: #e02c2c; }

.tiny {
  font-size: 9px;
  font-weight: 700;
  fill: #ff0000;
}

.ax,
.ax-text {
  font-size: 13px;
  letter-spacing: -.5px;
}

.ax {
  text-anchor: end;
}

.start {
  text-anchor: start;
}

.row {
  display: flex;
  flex: none;
  box-sizing: border-box;
  border-top: 1px solid #c00000;
}

.h16 { height: 16px; }
.h17 { height: 17px; }
.h18 { height: 18px; }
.h21 { height: 21px; }

.row-main {
  position: relative;
  flex: 1;
  line-height: 15px;
  white-space: nowrap;
}

.axis-cell {
  width: 50px;
  flex: none;
  margin-left: auto;
  border-left: 1px solid #c00000;
}

.x10 {
  display: block;
  width: 22px;
  height: 13px;
  line-height: 13px;
  padding-left: 1px;
  border: 1px solid #c00000;
  color: #e02c2c;
}

.date {
  font-size: 12px;
  fill: #e02c2c;
}

.cell-text {
  text-align: center;
  line-height: 15px;
}

.ind-tabs {
  flex: 1;
  display: flex;
}

.ind {
  padding: 0 3px 0 4px;
  border-right: 1px solid #c00000;
  font-family: "Liberation Mono", monospace;
  font-size: 10px;
  line-height: 16px;
  white-space: nowrap;
}

.ind.cn {
  width: 24px;
  padding: 0 3px;
  font-family: "Liberation Sans", "Noto Sans CJK SC", sans-serif;
  font-size: 12px;
}

.ind.cur {
  background: #5c5c5c;
  color: #f0f0f0;
}

.ind.on {
  color: #00ffff;
  background: #181818;
}

.zoom-btns {
  display: flex;
  line-height: 15px;
  text-align: center;
}

.zoom-btns span {
  flex: 1;
  border-right: 1px solid #c00000;
}

.zoom-btns span:last-child {
  border: 0;
}

.fund-head {
  line-height: 20px;
}

.fh {
  width: 50%;
  display: flex;
  box-sizing: border-box;
}

.fh-left {
  padding-left: 4px;
  border-right: 1px solid #c00000;
}

.fh-right {
  padding-left: 4px;
  padding-right: 5px;
}

.gap1 { margin-left: 13px; }
.gap2 { margin-left: 19px; }
.today { margin-left: auto; margin-right: 3px; }
.three { margin-left: auto; }

.tri {
  display: inline-block;
  border: 4px solid transparent;
  border-top: 8px solid #c0c0c0;
  border-bottom: 0;
  margin-left: 3px;
}

.funds {
  height: 138px;
  flex: none;
  display: flex;
  box-sizing: border-box;
  border-top: 1px solid #c00000;
}

.fund {
  width: 50%;
  box-sizing: border-box;
  display: flex;
  flex-direction: column;
  align-items: center;
  padding-top: 15px;
}

.fund:first-child {
  border-right: 1px solid #c00000;
}

.net {
  position: relative;
  width: 624px;
  height: 19px;
  color: #ff6464;
}

.net span {
  position: absolute;
  transform: translateX(-50%);
}

.bar-row {
  display: grid;
  grid-template-columns: 60px 624px 60px;
  column-gap: 14px;
}

.side {
  line-height: 17px;
  margin-top: -5px;
}

.right {
  text-align: right;
}

.red-t { color: #ff6464; }
.green-t { color: #64ff64; }

.bar {
  position: relative;
  display: flex;
  height: 25px;
}

.buy {
  background: linear-gradient(#780028 0 16%, #a00030 16% 32%, #ff3c50 32% 37%, #ff6868 37% 63%, #ff3c50 63% 68%, #a00030 68% 84%, #780028 84%);
}

.sell {
  flex: 1;
  background: linear-gradient(#006410 0 16%, #008c10 16% 28%, #20b010 28% 36%, #40e030 36% 44%, #60ff50 44% 56%, #40e030 56% 64%, #20b010 64% 72%, #008c10 72% 84%, #006410 84%);
}

.tick {
  position: absolute;
  top: 0;
  bottom: 0;
  width: 1px;
  background: #600000;
}

.orders {
  position: relative;
  display: grid;
  grid-template-columns: repeat(4, 156px);
  margin-top: 13px;
}

.orders::after {
  content: "";
  position: absolute;
  left: 39px;
  right: 39px;
  top: 24px;
  height: 1px;
  background: #c00000;
}

.order {
  display: flex;
  flex-direction: column;
  align-items: center;
}

.o-top {
  height: 24px;
  display: flex;
  flex-direction: column;
  justify-content: flex-end;
  align-items: center;
}

.o-top span {
  margin-bottom: 4px;
}

.o-bot {
  display: flex;
  flex-direction: column;
  align-items: center;
  padding-top: 1px;
}

.o-bot span {
  margin-top: 3px;
}

.seg {
  display: block;
  width: 78px;
}

.o-top span + .seg {
  margin-top: -1px;
}

.seg-red {
  background: linear-gradient(90deg, #ff6464 0 26%, #808080 26% 37%, #6c6c6c 37% 50%, #a03000 50% 63%, #882800 63% 87%, #642000 87%);
}

.seg-green {
  background: linear-gradient(90deg, #60ff40 0 26%, #2c9020 26% 50%, #147010 50% 75%, #0c5008 75%);
}

.foot-tabs {
  margin-top: auto;
}

.low-tabs {
  flex: 1;
  display: flex;
}

.low {
  padding: 0 3px;
  line-height: 16px;
  border-right: 1px solid #c00000;
}

.low.on {
  color: #00e0e0;
  background: #181818;
}

.book {
  width: 191px;
  box-sizing: border-box;
  flex: none;
  display: flex;
  flex-direction: column;
  border-left: 1px solid #c00000;
  border-right: 1px solid #c00000;
  padding-top: 1px;
}

.q {
  height: 18px;
  display: flex;
  align-items: center;
  padding-left: 2px;
  font-size: 15px;
}

.q-name {
  width: 51px;
  flex: none;
  position: relative;
  font-size: 15px;
}

.q-price {
  width: 35px;
  flex: none;
  color: #ff3232;
  font-size: 14px;
  font-weight: 700;
}

.q-price.dn {
  color: #00e000;
}

.q-price.first {
  margin-left: -4px;
  width: auto;
}

.q-flag {
  width: 11px;
  margin-left: 4px;
  flex: none;
  display: flex;
}

.q-total {
  margin-left: 9px;
  flex: none;
  font-size: 15px;
}

.q-vol {
  margin-left: auto;
  padding-right: 4px;
  color: #b4b400;
  font-size: 14px;
  font-weight: 700;
}

.q-vol.up {
  color: #00e000;
}

.down {
  position: absolute;
  left: 31px;
  top: 4px;
}

.queue {
  height: 32px;
}

.q-line {
  height: 16px;
  background-image: linear-gradient(90deg, #c00000 1px, transparent 1px);
  background-size: 3px 1px;
  background-position: 0 100%;
  background-repeat: repeat-x;
}

.count {
  margin-left: auto;
  padding-right: 2px;
  font-size: 14px;
  font-weight: 400;
}

.tape {
  height: 15px;
  display: grid;
  grid-template-columns: repeat(5, 38px);
  color: #b4b400;
  font-size: 14px;
  font-weight: 700;
  line-height: 15px;
  text-align: right;
}

.second {
  margin-top: 244px;
  height: 48px;
}

.book-tabs {
  margin-top: auto;
  height: 17px;
  box-sizing: border-box;
  display: grid;
  grid-template-columns: 44px 48px 47px 1fr;
  border-top: 1px solid #c00000;
  line-height: 16px;
  text-align: center;
  font-size: 13px;
}

.book-tabs span {
  border-right: 1px solid #c00000;
}

.book-tabs span:last-child {
  border: 0;
}

.book-tabs .on {
  color: #00e0e0;
  background: #181818;
}

.chips {
  width: 196px;
  box-sizing: border-box;
  flex: none;
  display: flex;
  flex-direction: column;
  border-right: 1px solid #808080;
}

.chips svg {
  display: block;
}

.code {
  fill: #ffff00;
  font-size: 12px;
  letter-spacing: .2px;
}

.edge {
  stroke: #fff;
  stroke-width: .8;
}

.chip-legend {
  margin: auto 0 0 65px;
  width: 126px;
  color: #000;
}

.chip-legend div {
  height: 17px;
  line-height: 17px;
  padding-left: 7px;
}

.chip-info {
  padding-left: 3px;
}

.chip-info > div {
  height: 17px;
  line-height: 17px;
  white-space: nowrap;
}

.profit {
  display: flex;
  align-items: center;
}

.meter {
  width: 126px;
  height: 13px;
  margin-left: 6px;
  display: flex;
  border: 1px solid #fff;
  line-height: 13px;
}

.meter-on {
  display: block;
  box-sizing: border-box;
  border: 1px solid #ffff00;
  margin: -1px 0 -1px -1px;
  height: 15px;
}

.meter-off {
  padding-left: 2px;
}

.chip-tabs {
  height: 17px;
  box-sizing: border-box;
  display: grid;
  grid-template-columns: 22px repeat(6, 24px) 1fr;
  border-top: 1px solid #c00000;
  line-height: 16px;
  text-align: center;
  font-size: 13px;
}

.chip-tabs span {
  border-right: 1px solid #c00000;
}

.chip-tabs span:last-child {
  border: 0;
}

.chip-tabs .on {
  color: #00e0e0;
  background: #181818;
}

.footer {
  height: 4px;
  flex: none;
  box-sizing: border-box;
  border-top: 2px solid #d00000;
  background: #c8c8c8;
}
</style>

<style>
html,
body {
  margin: 0;
  background: #000;
}
</style>
